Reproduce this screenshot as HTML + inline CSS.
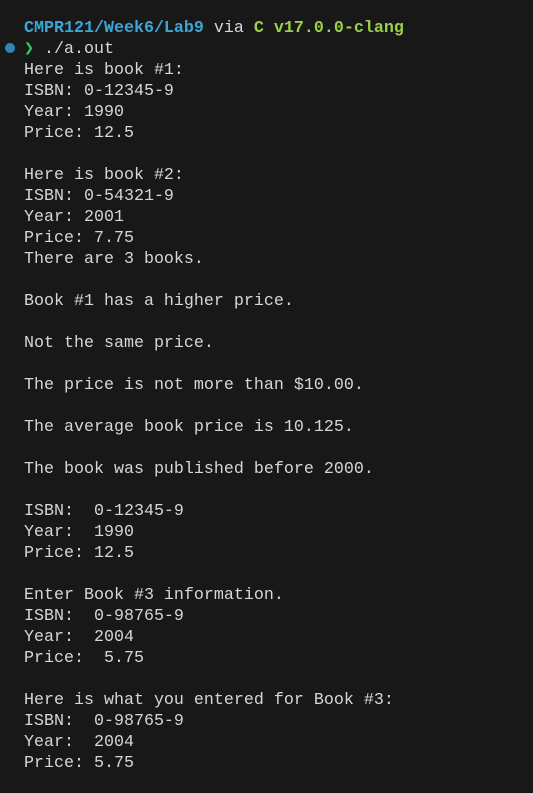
<!DOCTYPE html>
<html><head><style>
html,body{margin:0;padding:0;background:#181818;width:533px;height:793px;overflow:hidden}
pre{margin:0;position:absolute;left:24px;top:18px;font-family:"Liberation Mono",monospace;font-size:16.67px;line-height:21px;color:#d6d6d6}
.b{color:#3aa7d6;font-weight:bold}.g{color:#9ad04a;font-weight:bold}.gr{color:#2ecc71;font-weight:bold}
.dot{position:absolute;left:5px;top:43px;width:10px;height:10px;border-radius:50%;background:#2f86b3}
</style></head><body>
<div class="dot"></div>
<pre><span class="b">CMPR121/Week6/Lab9</span> via <span class="g">C v17.0.0-clang</span>
<span class="gr">❯</span> ./a.out
Here is book #1:
ISBN: 0-12345-9
Year: 1990
Price: 12.5

Here is book #2:
ISBN: 0-54321-9
Year: 2001
Price: 7.75
There are 3 books.

Book #1 has a higher price.

Not the same price.

The price is not more than $10.00.

The average book price is 10.125.

The book was published before 2000.

ISBN:  0-12345-9
Year:  1990
Price: 12.5

Enter Book #3 information.
ISBN:  0-98765-9
Year:  2004
Price:  5.75

Here is what you entered for Book #3:
ISBN:  0-98765-9
Year:  2004
Price: 5.75</pre>
</body></html>
